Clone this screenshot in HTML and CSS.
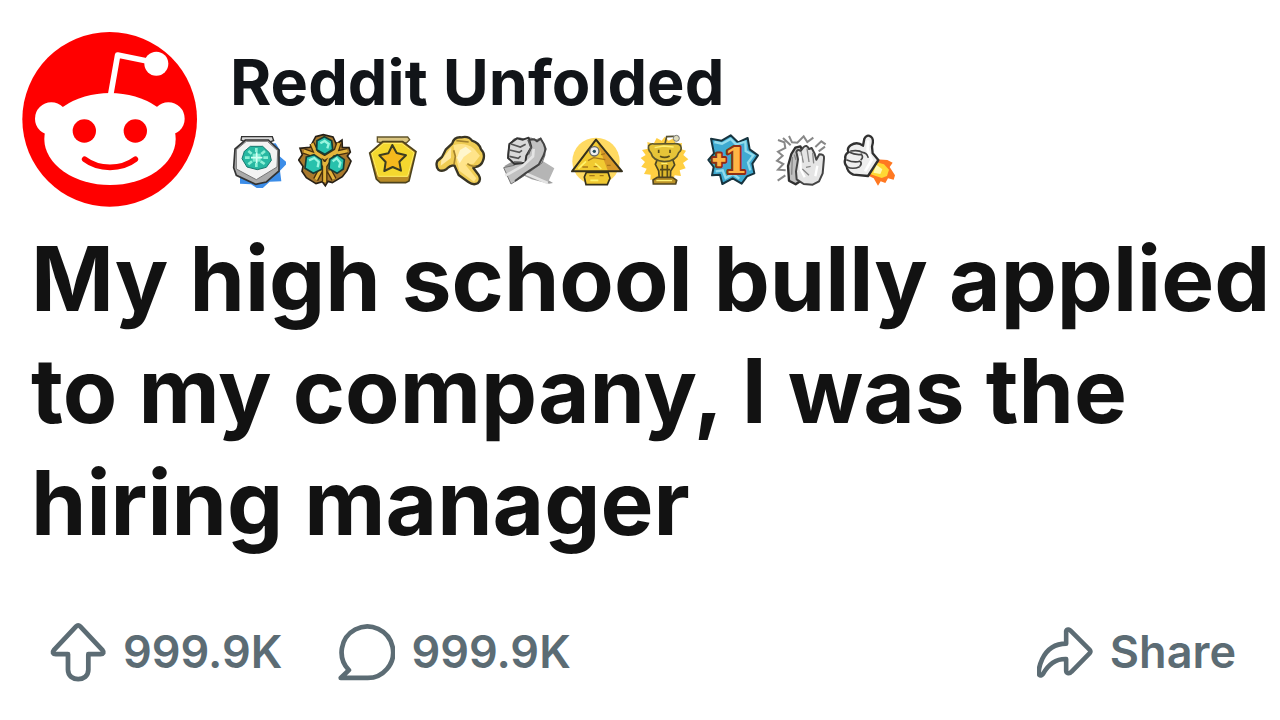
FILE: index.html
```html
<!DOCTYPE html>
<html lang="en">

<head>
    <meta charset="UTF-8">
    <meta name="viewport" content="width=device-width, initial-scale=1.0">
    <title>Reddit Unfolded</title>
    <link rel="stylesheet" href="styles.css">
</head>

<body>
    <article class="post">
        <!-- Author -->
        <header class="post-header">
            <svg class="avatar" viewBox="36 36 525 525" aria-hidden="true">
                <circle cx="299" cy="298" r="262" fill="#ff0000"/>
                <path d="M301 230 323 105 415 124" fill="none" stroke="#fff" stroke-width="17" stroke-linejoin="round"/>
                <g fill="#fff">
                    <circle cx="439" cy="131" r="36"/>
                    <circle cx="124" cy="296" r="49"/>
                    <circle cx="475" cy="296" r="49"/>
                    <ellipse cx="300" cy="357" rx="197" ry="138"/>
                </g>
                <g fill="#ff0000">
                    <circle cx="223" cy="333" r="35"/>
                    <circle cx="376" cy="333" r="35"/>
                </g>
                <path d="M224 418Q255 442 300 442T376 418" fill="none" stroke="#ff0000" stroke-width="17" stroke-linecap="round"/>
            </svg>

            <div class="author">
                <h2 class="author-name">Reddit Unfolded</h2>
                <div class="awards">
                    <!-- Hexagon medal -->
                    <svg class="award" viewBox="15 21 168 168" aria-hidden="true">
                        <path d="M45 60 152 55 165 76 162 92 187 114 165 137 169 169 134 170 106 196 78 178 45 176Z" fill="#3c8de8"/>
                        <path d="M50 35H142L146 47 125 54H70L48 45Z" fill="#d8d8d8" stroke="#333" stroke-width="4"/>
                        <path d="M61 45H130L162 75V138L124 171 92 178 34 151 26 128 30 72Z" fill="#aaa" stroke="#333" stroke-width="5"/>
                        <path d="M64 49H127L158 77 156 126 94 164 34 132V74Z" fill="#f3f3f3" stroke="#777" stroke-width="3"/>
                        <path d="M76 64H113L134 84 139 106 124 127 97 134 66 126 51 101 58 79Z" fill="#27b8a2" stroke="#16786e" stroke-width="3"/>
                        <path d="M94 69v12M94 114v12M60 98h14M115 98h14M70 78l10 8M120 78l-11 9M70 118l11-9M119 117l-12-8" stroke="#8df0d6" stroke-width="8"/>
                        <path d="M83 86h24v24H83Z" fill="#7cebd0"/>
                        <path d="M95 82v32M78 98h34" stroke="#d3fff3" stroke-width="5"/>
                    </svg>

                    <!-- Three gems -->
                    <svg class="award" viewBox="219 21 168 168" aria-hidden="true">
                        <path d="M272 35 295 29 324 36 334 57 351 45 352 67 372 68 376 81 367 93 378 108 366 137 352 155 322 173 309 169 301 182 292 170 273 176 244 158 231 139 234 124 221 105 232 89 225 70 255 67Z" fill="#a9792d" stroke="#272016" stroke-width="5"/>
                        <path d="M236 78 281 94 299 123 322 87 368 77M261 55 273 83 299 99 334 77 342 54M299 111V171M286 137 272 164M313 137 327 163" fill="none" stroke="#49300e" stroke-width="17"/>
                        <path d="M236 78 281 94 299 123 322 87 368 77M261 55 273 83 299 99 334 77 342 54M299 111V171M286 137 272 164M313 137 327 163" fill="none" stroke="#e3b43b" stroke-width="9"/>
                        <g fill="#28c1ac" stroke="#143e37" stroke-width="5">
                            <path d="M276 47 298 35 320 47 323 73 299 88 275 74Z"/>
                            <path d="M244 96 267 89 289 104 290 133 265 145 240 130Z"/>
                            <path d="M314 103 337 89 358 104 355 132 336 145 312 131Z"/>
                        </g>
                        <path d="M286 55 299 48 311 57 307 70M252 106 268 99 281 111 278 127M323 109 335 100 346 113 342 128" fill="none" stroke="#99f6df" stroke-width="7"/>
                    </svg>

                    <!-- Gold star -->
                    <svg class="award" viewBox="18 21 168 168" aria-hidden="true">
                        <path d="M52 36H143L149 44 139 54 124 54H70L52 51Z" fill="#dac580" stroke="#62552c" stroke-width="4"/>
                        <path d="M68 50H128L168 80 147 168 137 173H61L49 162 29 84Z" fill="#b98b26" stroke="#4d431d" stroke-width="5"/>
                        <path d="M71 55H125L162 83 143 154H55L35 85Z" fill="#f4d82f" stroke="#fff26a" stroke-width="3"/>
                        <path d="M97 60 110 84 138 91 118 110 123 137 98 126 73 138 77 111 58 91 85 85Z" fill="#f5b91d" stroke="#3c3c20" stroke-width="6" stroke-linejoin="round"/>
                    </svg>

                    <!-- Pointing hand -->
                    <svg class="award" viewBox="222 21 168 168" aria-hidden="true">
                        <path d="M277 55Q282 35 304 37 326 32 336 47 357 53 363 73 377 86 369 107 364 124 345 126L340 129 356 150Q365 165 353 175 340 182 325 171L296 150 283 121Q269 121 259 133 246 141 235 134 226 122 232 108L246 96 257 74Z" fill="#efcc54" stroke="#393524" stroke-width="7" stroke-linejoin="round"/>
                        <path d="M280 61Q315 50 342 71L360 92 341 116 316 119 349 160 342 170 298 137 288 98Z" fill="#ffe48a"/>
                        <path d="M300 75 317 65 335 79 311 96 299 115 291 98Z" fill="#fff6cd"/>
                        <path d="M274 67 244 105 242 122 273 99Z" fill="#ffeaa5"/>
                        <path d="M281 76 286 94 282 118M322 116Q335 127 347 123M289 47 326 51" fill="none" stroke="#a3822d" stroke-width="5"/>
                    </svg>

                    <!-- Hand clasp -->
                    <svg class="award" viewBox="21 21 168 168" aria-hidden="true">
                        <path d="M27 124 60 104 174 174 162 176 110 163Z" fill="#9c9c9c"/>
                        <path d="M120 128 142 107 178 130 158 174 91 151Z" fill="#b5b5b5"/>
                        <path d="M38 92 42 61 56 42 75 39 92 43 108 39 122 45 137 39 147 58 150 90 141 114 91 150 48 177 26 128 58 121Z" fill="#c1c1c1" stroke="#777" stroke-width="3" stroke-linejoin="round"/>
                        <path d="M59 117 39 99 43 57 66 40 84 44 101 38 109 67 94 92 91 113Z" fill="#d9d9d9" stroke="#333" stroke-width="6" stroke-linejoin="round"/>
                        <path d="M48 57 76 66 92 58M44 75 73 82 81 76M43 94 70 100 77 93M57 111 80 112M99 44 108 68 100 88" fill="none" stroke="#555" stroke-width="5"/>
                        <path d="M116 72 114 94 84 122 31 152M94 146 158 174" fill="none" stroke="#e4e4e4" stroke-width="8"/>
                        <path d="M105 44 118 43 126 49 137 41 147 58 152 72 146 91 131 119 91 145 60 168" fill="none" stroke="#444" stroke-width="6"/>
                    </svg>

                    <!-- Pyramid -->
                    <svg class="award" viewBox="225 21 168 168" aria-hidden="true">
                        <circle cx="303" cy="109" r="71" fill="#ffda62"/>
                        <path d="M303 44 231 139H381Z" fill="#f1ca31"/>
                        <path d="M309 58 381 139H339Z" fill="#d89929"/>
                        <path d="M303 44 231 139H381Z" fill="none" stroke="#35301c" stroke-width="6" stroke-linejoin="round"/>
                        <path d="M274 142 268 156 273 179H337L345 160 339 142Z" fill="#f0c832" stroke="#35301c" stroke-width="5"/>
                        <path d="M279 107 296 98 331 104M262 126h17M296 125h14M336 121h11M318 89 330 86M283 152h16M314 152h12" stroke="#a87918" stroke-width="4" fill="none"/>
                        <path d="M250 131 273 109M300 115 319 132M286 166h24" stroke="#fff26b" stroke-width="5"/>
                        <circle cx="298" cy="79" r="14" fill="#eee" stroke="#666" stroke-width="4"/>
                        <circle cx="298" cy="79" r="5" fill="#254b5b"/>
                    </svg>

                    <!-- Golden statue -->
                    <svg class="award" viewBox="24 21 168 168" aria-hidden="true">
                        <path d="M104 35 116 47 131 40 137 56 156 54 153 72 168 77 160 90 175 103 159 114 167 130 149 136 153 153 134 151 129 168 108 162 91 174 79 160 61 165 62 149 42 147 50 131 34 125 45 111 32 99 47 90 36 75 54 71 52 51 71 56 80 39 95 47Z" fill="#ffcf42"/>
                        <path d="M105 57 110 35 132 34" fill="none" stroke="#555032" stroke-width="5"/>
                        <circle cx="139" cy="40" r="9" fill="#dedbbc" stroke="#777" stroke-width="3"/>
                        <path d="M82 103 76 118 86 138 88 164H121L122 138 134 120 128 103Z" fill="#e0ba2d" stroke="#4b4523" stroke-width="5"/>
                        <path d="M56 62Q62 54 73 57L133 56Q147 54 152 63 157 75 146 83 139 108 103 110 68 107 63 84 53 75 56 62Z" fill="#e6c438" stroke="#5c562a" stroke-width="5"/>
                        <path d="M86 74v10M120 74v10M90 94Q105 101 119 93M97 120V162M112 120V162M90 134h30" fill="none" stroke="#5a4d18" stroke-width="5"/>
                        <path d="M69 165 82 157H127L140 166 137 177H70Z" fill="#bc9328" stroke="#514520" stroke-width="5"/>
                        <path d="M74 68 101 63 131 66M94 115h18M79 167h47" fill="none" stroke="#fff073" stroke-width="4"/>
                    </svg>

                    <!-- Plus one burst -->
                    <svg class="award" viewBox="228 21 168 168" aria-hidden="true">
                        <path d="M243 41 275 47 302 31 324 52 353 39 359 73 384 91 367 116 373 145 351 154 335 176 308 160 277 177 270 149 246 151 251 126 235 105 252 85Z" fill="#3faad1" stroke="#17343f" stroke-width="6" stroke-linejoin="round"/>
                        <path d="M253 51 276 56 302 42 318 58 346 50 347 78 370 91 354 113 361 136M257 139 278 136 287 159 309 147 328 161" fill="none" stroke="#92dced" stroke-width="7"/>
                        <text class="plus-one" x="242" y="126">+<tspan class="plus-digit" x="281" y="143">1</tspan></text>
                    </svg>

                    <!-- Clapping hands -->
                    <svg class="award" viewBox="27 21 168 168" aria-hidden="true">
                        <path d="M72 33 81 52 97 53 116 34 127 51 145 38M39 45 58 52 61 69 39 80 53 92 36 107 55 117 39 134 62 136M38 167 61 151M151 66 169 49 182 58M161 79 180 65M54 39 77 61" fill="none" stroke="#888" stroke-width="6"/>
                        <path d="M72 167 69 123 79 87 91 68 106 64 118 89 111 165 92 178Z" fill="#c0c0c0" stroke="#303030" stroke-width="7" stroke-linejoin="round"/>
                        <path d="M95 163 93 139 99 103 94 81Q98 70 107 78L115 67Q125 57 132 72L140 69 149 86 154 104 163 88Q179 88 177 100L173 145 162 169 143 179 116 177Z" fill="#e5e5e5" stroke="#444" stroke-width="6" stroke-linejoin="round"/>
                        <path d="M108 79 115 113M126 70 132 111M143 83 146 115M112 132 132 151M137 124 123 127M82 96 80 149M88 89 93 105" fill="none" stroke="#888" stroke-width="4"/>
                        <path d="M106 92 107 133 119 157M157 122 151 154" fill="none" stroke="#fff" stroke-width="7"/>
                    </svg>

                    <!-- Rocket thumb -->
                    <svg class="award" viewBox="231 21 168 168" aria-hidden="true">
                        <path d="M333 103 367 105 383 113 374 126 390 151 386 164 369 160 361 174 347 169 339 182 326 160 307 151Z" fill="#ff7821"/>
                        <path d="M332 111 357 118 372 134 366 153 350 159 317 148Z" fill="#ffd834"/>
                        <path d="M334 119 352 133 346 147 325 143Z" fill="#fff9b0"/>
                        <path d="M294 62 298 41Q305 27 318 35 328 43 321 65L323 85 340 105 309 153 265 149Q247 141 245 124 236 115 241 101 239 89 250 82 245 69 257 61 276 48 294 62Z" fill="#eee" stroke="#303030" stroke-width="7" stroke-linejoin="round"/>
                        <path d="M256 78Q282 74 292 82 306 83 310 98M252 81Q271 91 290 88M244 104Q269 115 286 108M247 126Q264 134 284 125M287 86Q298 96 287 105M286 109Q292 117 284 124" fill="none" stroke="#444" stroke-width="5"/>
                        <path d="M309 46 308 76 320 105 300 139" fill="none" stroke="#fff" stroke-width="8"/>
                    </svg>
                </div>
            </div>
        </header>

        <h1 class="post-title">My high school bully applied<br>to my company, I was the<br>hiring manager</h1>

        <!-- Actions -->
        <footer class="post-actions">
            <button type="button" class="action">
                <svg class="action-icon" viewBox="60 33 168 177" aria-hidden="true">
                    <path d="M143 43Q146 43 149 46L214 115Q218 120 217 124 215 128 209 128H173V174C173 211 113 211 113 174V128H77Q71 128 69 124 68 120 72 115L137 46Q140 43 143 43Z"/>
                </svg>
                <span>999.9K</span>
            </button>
            <button type="button" class="action">
                <svg class="action-icon" viewBox="60 36 168 177" aria-hidden="true">
                    <path d="M68 201 92 178A76 76 0 1 1 142 201Z"/>
                </svg>
                <span>999.9K</span>
            </button>
            <button type="button" class="action action-share">
                <svg class="action-icon" viewBox="48 39 174 177" aria-hidden="true">
                    <path d="M137 64Q138 58 144 59 148 60 152 64L209 121Q213 126 209 131L153 188Q148 194 142 192 137 190 137 185V149C101 148 80 170 66 195Q60 202 55 197C52 190 54 171 64 149 78 120 102 102 137 102Z"/>
                </svg>
                <span>Share</span>
            </button>
        </footer>
    </article>
</body>

</html>
```

FILE: styles.css
```css
/* Global Styles */
* {
    margin: 0;
    padding: 0;
    box-sizing: border-box;
}

body {
    background-color: #fff;
    color: #111418;
    font-family: 'Inter', sans-serif;
}

/* Header */
.post-header {
    display: flex;
    gap: 33px;
    padding: 32px 22px 0;
}

.avatar {
    width: 175px;
    height: 175px;
    flex-shrink: 0;
}

.author {
    padding-top: 12px;
}

.author-name {
    font-size: 63px;
    font-weight: 700;
    line-height: 76px;
}

.awards {
    display: flex;
    gap: 12px;
    margin-top: 12px;
}

.award {
    width: 56px;
    height: 56px;
}

.plus-one {
    fill: #ffb545;
    stroke: #8f2f14;
    stroke-width: 12px;
    stroke-linejoin: round;
    paint-order: stroke;
    font-size: 72px;
    font-weight: 900;
}

.plus-digit {
    font-family: 'DejaVu Serif', serif;
    font-size: 104px;
    font-weight: 700;
}

/* Title */
.post-title {
    padding: 16px 0 0 31px;
    color: #121212;
    font-size: 89px;
    font-weight: 700;
    line-height: 112px;
    white-space: nowrap;
}

/* Actions */
.post-actions {
    display: flex;
    gap: 56px;
    padding: 63px 44px 0 50px;
}

.action {
    display: flex;
    align-items: center;
    gap: 16px;
    background: none;
    border: none;
    color: #5c6c74;
    font-family: inherit;
    font-size: 45px;
    font-weight: 600;
    line-height: 60px;
    cursor: pointer;
}

.action-icon {
    width: 57px;
    height: 60px;
    fill: none;
    stroke: currentColor;
    stroke-width: 14px;
    stroke-linejoin: round;
}

.action-share {
    margin-left: auto;
}
```
